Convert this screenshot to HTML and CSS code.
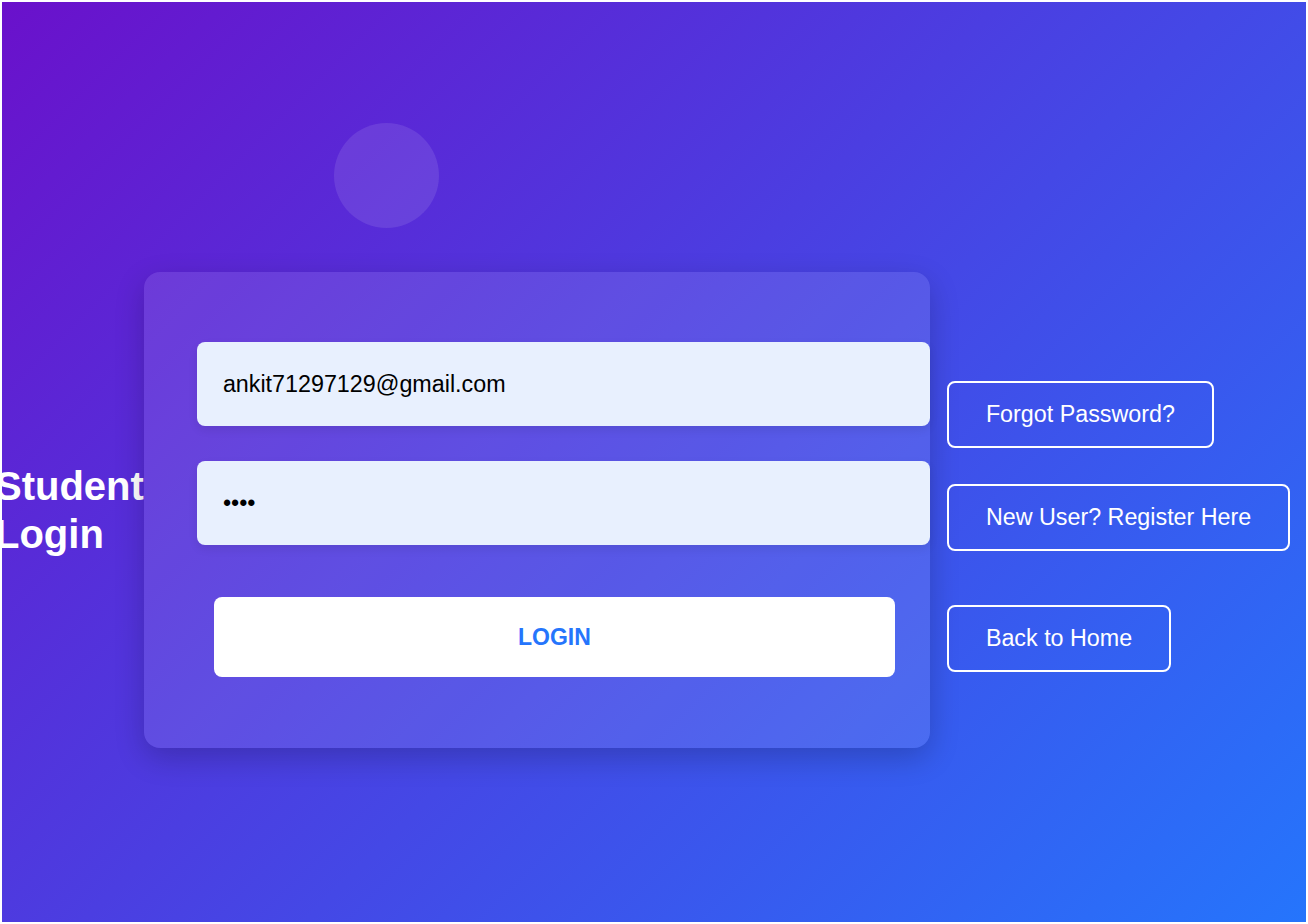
FILE: index.html
```html
<!DOCTYPE html>
<html lang="en">
<head>
<meta charset="utf-8">
<title>Student Login</title>
<link rel="stylesheet" href="styles.css">
</head>
<body>
<div class="page">
  <div class="bubble"></div>
  <main class="row">
    <h1 class="title">Student<br>Login</h1>
    <form class="card">
      <input class="field" type="email" value="ankit71297129@gmail.com">
      <input class="field" type="password" value="abcd">
      <button class="login" type="button">LOGIN</button>
    </form>
    <nav class="links">
      <a class="link-btn" href="#">Forgot Password?</a>
      <a class="link-btn" href="#">New User? Register Here</a>
      <a class="link-btn back" href="#">Back to Home</a>
    </nav>
  </main>
</div>
</body>
</html>
```

FILE: styles.css
```css
html, body {
  margin: 0;
  padding: 0;
}
body {
  background: #ffffff;
  padding: 2px;
  font-family: "Liberation Sans", Arial, sans-serif;
}
.page {
  position: relative;
  height: 920px;
  overflow: hidden;
  background: linear-gradient(135deg, #6a11cb 0%, #2575fc 100%);
  display: flex;
  align-items: center;
}
.bubble {
  position: absolute;
  left: 332px;
  top: 121px;
  width: 105px;
  height: 105px;
  border-radius: 50%;
  background: rgba(255, 255, 255, 0.1);
}
.row {
  display: flex;
  align-items: center;
  margin-top: 96px;
}
.title {
  margin: 0 0 0 -7px;
  color: #ffffff;
  font-size: 40px;
  line-height: 48px;
  font-weight: bold;
  white-space: nowrap;
}
.card {
  box-sizing: border-box;
  width: 786px;
  height: 476px;
  padding: 70px 0 70px 53px;
  border-radius: 16px;
  background: rgba(255, 255, 255, 0.1);
  box-shadow: 0 10px 30px rgba(0, 0, 0, 0.2);
  display: flex;
  flex-direction: column;
}
.field {
  box-sizing: border-box;
  width: 100%;
  height: 84px;
  margin: 0 0 35px 0;
  padding: 0 26px;
  border: none;
  border-radius: 8px;
  background: #e8f0fe;
  color: #000000;
  font-family: "Liberation Sans", Arial, sans-serif;
  font-size: 23.3px;
  outline: none;
  box-shadow: 0 4px 10px rgba(0, 0, 0, 0.08);
}
.field + .field {
  margin-bottom: 52px;
}
.login {
  width: 681px;
  height: 80px;
  margin-left: 17px;
  border: none;
  border-radius: 8px;
  background: #ffffff;
  color: #2575fc;
  font-family: "Liberation Sans", Arial, sans-serif;
  font-size: 23px;
  font-weight: bold;
  cursor: pointer;
}
.links {
  display: flex;
  flex-direction: column;
  align-items: flex-start;
  margin-left: 17px;
  padding-top: 33px;
}
.link-btn {
  display: block;
  padding: 18px 37px;
  border: 2px solid #ffffff;
  border-radius: 8px;
  color: #ffffff;
  text-decoration: none;
  font-size: 23.3px;
  line-height: 27px;
  white-space: nowrap;
  margin-bottom: 36px;
}
.link-btn.back {
  margin-top: 18px;
  margin-bottom: 0;
}
```
